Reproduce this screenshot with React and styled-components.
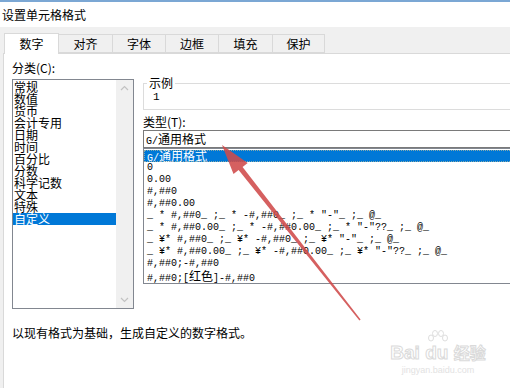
import React from 'react'
import styled, { createGlobalStyle } from 'styled-components'

const GlobalStyle = createGlobalStyle`
  html, body {
    margin: 0;
    padding: 0;
    background: #fff;
  }
  body {
    font-family: "Noto Sans CJK SC", "Liberation Sans", sans-serif;
    font-size: 12px;
    color: #000;
  }
`

const Window = styled.div`
  position: relative;
  width: 510px;
  height: 388px;
  overflow: hidden;
  display: flex;
  flex-direction: column;
  background: #f0f0f0;
`

const TopEdge = styled.div`
  flex: none;
  height: 2px;
  background: #7ba7d4;
`

const TitleBar = styled.div`
  flex: none;
  height: 25px;
  display: flex;
  align-items: center;
  padding-left: 2px;
  background: #fff;
  line-height: 14px;
`

const TabStrip = styled.div`
  flex: none;
  height: 26px;
  display: flex;
  align-items: flex-end;
  padding-left: 4px;
`

const Tab = styled.div`
  position: relative;
  z-index: ${p => (p.active ? 2 : 1)};
  box-sizing: border-box;
  width: ${p => p.w}px;
  height: ${p => (p.active ? 21 : 19)}px;
  margin-left: -1px;
  margin-bottom: ${p => (p.active ? -1 : 0)}px;
  display: flex;
  align-items: center;
  justify-content: center;
  border: 1px solid #d9d9d9;
  border-bottom: ${p => (p.active ? 'none' : '1px solid #d9d9d9')};
  background: ${p => (p.active ? '#fff' : '#f0f0f0')};
  line-height: 14px;
  &:first-child {
    margin-left: 0;
  }
`

const Panel = styled.div`
  flex: 1;
  display: flex;
  flex-direction: column;
  margin-left: 3px;
  padding: 7px 0 0 8px;
  background: #fff;
  border-left: 1px solid #d9d9d9;
  border-top: 1px solid #d9d9d9;
`

const Columns = styled.div`
  display: flex;
  align-items: flex-start;
  gap: 9px;
`

const LeftColumn = styled.div`
  flex: none;
  width: 122px;
  display: flex;
  flex-direction: column;
`

const RightColumn = styled.div`
  flex: none;
  width: 420px;
  margin-top: 15px;
  display: flex;
  flex-direction: column;
`

const Label = styled.div`
  line-height: 14px;
  height: 14px;
  margin-top: ${p => p.gap || 0}px;
`

const CategoryBox = styled.div`
  box-sizing: border-box;
  height: 230px;
  margin-top: 4px;
  display: flex;
  border: 1px solid #828790;
`

const CategoryItems = styled.div`
  flex: 1;
  padding-top: 1px;
`

const CategoryItem = styled.div`
  height: 12px;
  line-height: 12px;
  padding-left: 1px;
  white-space: nowrap;
  background: ${p => (p.selected ? '#0078d7' : 'transparent')};
  color: ${p => (p.selected ? '#fff' : '#000')};
`

const ScrollBar = styled.div`
  flex: none;
  width: 17px;
  display: flex;
  flex-direction: column;
  justify-content: space-between;
  align-items: center;
  padding: 5px 0;
  background: #f0f0f0;
`

const GroupBox = styled.fieldset`
  margin: 0;
  padding: 0 0 5px 8px;
  border: 1px solid #dcdcdc;
`

const Legend = styled.legend`
  margin-left: -5px;
  padding: 0 2px;
  line-height: 14px;
`

const Sample = styled.div`
  line-height: 14px;
  padding-left: 1px;
  font-family: "Liberation Mono", monospace;
  font-size: 11px;
`

const TypeInput = styled.div`
  box-sizing: border-box;
  height: 18px;
  margin-top: 1px;
  padding-left: 2px;
  border: 1px solid #7a7a7a;
  line-height: 16px;
  white-space: pre;
  font-family: "Liberation Mono", monospace;
  font-size: 10px;
`

const TypeList = styled.div`
  box-sizing: border-box;
  height: 136px;
  padding-top: 1px;
  border: 1px solid #828790;
`

const TypeItem = styled.div`
  box-sizing: border-box;
  height: 12px;
  line-height: 12px;
  padding-left: 3px;
  white-space: pre;
  font-family: "Liberation Mono", monospace;
  font-size: 10px;
  background: ${p => (p.selected ? '#0078d7' : 'transparent')};
  color: ${p => (p.selected ? '#fff' : '#000')};
  outline: ${p => (p.selected ? '1px dotted #8aa' : 'none')};
  outline-offset: -1px;
`

const Han = styled.span`
  font-family: "Noto Sans CJK SC", sans-serif;
  font-size: 12px;
`

const Description = styled.div`
  margin-top: 17px;
  line-height: 14px;
`

const Annotation = styled.svg`
  position: absolute;
  left: 0;
  top: 0;
  pointer-events: none;
`

const Watermark = styled.div`
  position: absolute;
  left: 388px;
  top: 330px;
  width: 100px;
  display: flex;
  flex-direction: column;
  align-items: center;
  color: #e4e4e4;
  font-family: "Liberation Sans", sans-serif;
  pointer-events: none;
`

const Brand = styled.div`
  font-size: 19px;
  font-weight: bold;
  line-height: 20px;
  color: #fff;
  -webkit-text-stroke: 1px #dadada;
  white-space: nowrap;
  margin-top: -2px;
`

const BrandHan = styled.span`
  font-family: "Noto Sans CJK SC", sans-serif;
  font-size: 16px;
`

const Site = styled.div`
  font-size: 9px;
  line-height: 10px;
  margin-top: 2px;
  color: #e2e2e2;
`

const tabs = [
  ['数字', 55],
  ['对齐', 55],
  ['字体', 54],
  ['边框', 54],
  ['填充', 55],
  ['保护', 53],
]

const categories = [
  '常规', '数值', '货币', '会计专用', '日期', '时间',
  '百分比', '分数', '科学记数', '文本', '特殊', '自定义',
]

const formats = [
  ['G/', <Han key="h">通用格式</Han>],
  '0',
  '0.00',
  '#,##0',
  '#,##0.00',
  '_ * #,##0_ ;_ * -#,##0_ ;_ * "-"_ ;_ @_ ',
  '_ * #,##0.00_ ;_ * -#,##0.00_ ;_ * "-"??_ ;_ @_ ',
  '_ ¥* #,##0_ ;_ ¥* -#,##0_ ;_ ¥* "-"_ ;_ @_ ',
  '_ ¥* #,##0.00_ ;_ ¥* -#,##0.00_ ;_ ¥* "-"??_ ;_ @_ ',
  '#,##0;-#,##0',
  ['#,##0;[', <Han key="h">红色</Han>, ']-#,##0'],
]

const Chevron = ({ up }) => (
  <svg width="9" height="6" viewBox="0 0 9 6">
    <path
      d={up ? 'M1 5 L4.5 1.5 L8 5' : 'M1 1 L4.5 4.5 L8 1'}
      fill="none"
      stroke="#c2c2c2"
      strokeWidth="1.2"
    />
  </svg>
)

const Arrow = () => (
  <Annotation width="510" height="388" viewBox="0 0 510 388">
    <polygon
      points="222,145 233.5,174.1 238.6,170 359.4,320.5 360.6,319.5 242.6,166.9 247.7,162.9"
      fill="#cf4a4a"
      opacity="0.88"
    />
  </Annotation>
)

const Paw = () => (
  <svg width="26" height="14" viewBox="0 0 26 14">
    <g fill="none" stroke="#dedede" strokeWidth="1">
      <ellipse cx="6" cy="8" rx="2.5" ry="3" />
      <ellipse cx="10" cy="3.5" rx="2.5" ry="3" />
      <ellipse cx="16" cy="3.5" rx="2.5" ry="3" />
      <ellipse cx="20" cy="8" rx="2.5" ry="3" />
    </g>
  </svg>
)

export default function App () {
  return (
    <>
      <GlobalStyle />
      <Window>
        <TopEdge />
        <TitleBar>设置单元格格式</TitleBar>
        <TabStrip>
          {tabs.map(([name, w], i) => (
            <Tab key={name} w={w} active={i === 0}>{name}</Tab>
          ))}
        </TabStrip>
        <Panel>
          <Columns>
            <LeftColumn>
              <Label>分类(C):</Label>
              <CategoryBox>
                <CategoryItems>
                  {categories.map((c, i) => (
                    <CategoryItem key={c} selected={i === categories.length - 1}>
                      {c}
                    </CategoryItem>
                  ))}
                </CategoryItems>
                <ScrollBar>
                  <Chevron up />
                  <Chevron />
                </ScrollBar>
              </CategoryBox>
            </LeftColumn>
            <RightColumn>
              <GroupBox>
                <Legend>示例</Legend>
                <Sample>1</Sample>
              </GroupBox>
              <Label gap={5}>类型(T):</Label>
              <TypeInput>
                G/<Han>通用格式</Han>
              </TypeInput>
              <TypeList>
                {formats.map((f, i) => (
                  <TypeItem key={i} selected={i === 0}>{f}</TypeItem>
                ))}
              </TypeList>
            </RightColumn>
          </Columns>
          <Description>以现有格式为基础，生成自定义的数字格式。</Description>
        </Panel>
        <Arrow />
        <Watermark>
          <Paw />
          <Brand>
            Bai du <BrandHan>经验</BrandHan>
          </Brand>
          <Site>jingyan.baidu.com</Site>
        </Watermark>
      </Window>
    </>
  )
}
